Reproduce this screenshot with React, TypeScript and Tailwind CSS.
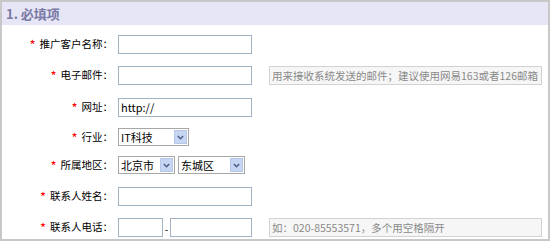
import React from "react";

const FONT = { fontFamily: '"Noto Sans CJK SC", "Noto Sans", sans-serif' };

function Label({ text }: { text: string }) {
  return (
    <div className="w-[111px] mr-[5px] shrink-0 flex justify-end items-center text-[10.5px] leading-none text-black">
      <span className="text-[#ff0000] text-[13px] mr-[4px] leading-none">*</span>
      <span>{text}：</span>
    </div>
  );
}

function Input({ w, value }: { w: string; value?: string }) {
  return (
    <div className={`${w} h-[19px] border border-[#a3b3c6] bg-white flex items-center pl-[2px] text-[11px] text-black`}>
      {value}
    </div>
  );
}

function Select({ w, value }: { w: string; value: string }) {
  return (
    <div className={`${w} h-[18px] border border-[#a7a7a7] bg-white flex items-center text-[11px] text-black`}>
      <span className="flex-1 pl-[2px] leading-none">{value}</span>
      <span className="w-[13px] h-[14px] mr-[1px] bg-[#c6d5f2] border border-[#b6c7e8] flex items-center justify-center">
        <svg width="7" height="5" viewBox="0 0 7 5">
          <path d="M0.8 1 L3.5 3.7 L6.2 1" fill="none" stroke="#4a5f87" strokeWidth="1.5" />
        </svg>
      </span>
    </div>
  );
}

function Hint({ text }: { text: string }) {
  return (
    <div className="ml-[17px] w-[273px] h-[19px] border border-[#d2d2d2] bg-[#f6f6f6] flex items-center pl-[2px] text-[10.5px] text-[#8a8a8a] whitespace-nowrap overflow-hidden">
      {text}
    </div>
  );
}

export default function App() {
  return (
    <div className="w-[550px] h-[241px] border-2 border-[#c8c8c8] bg-white flex flex-col overflow-hidden" style={FONT}>
      <div className="h-[23px] shrink-0 bg-[#e6e6f6] flex items-center pl-[4px] text-[13px] font-bold text-[#7a7aa6]">
        1. 必填项
      </div>
      <div className="flex flex-col">
        <div className="mt-[10px] flex items-center">
          <Label text="推广客户名称" />
          <Input w="w-[134px]" />
        </div>
        <div className="mt-[12px] flex items-center">
          <Label text="电子邮件" />
          <Input w="w-[134px]" />
          <Hint text="用来接收系统发送的邮件；建议使用网易163或者126邮箱" />
        </div>
        <div className="mt-[13px] flex items-center">
          <Label text="网址" />
          <Input w="w-[134px]" value="http://" />
        </div>
        <div className="mt-[11px] flex items-center">
          <Label text="行业" />
          <Select w="w-[71px]" value="IT科技" />
        </div>
        <div className="mt-[10px] flex items-center">
          <Label text="所属地区" />
          <Select w="w-[57px]" value="北京市" />
          <div className="ml-[3px]">
            <Select w="w-[67px]" value="东城区" />
          </div>
        </div>
        <div className="mt-[13px] flex items-center">
          <Label text="联系人姓名" />
          <Input w="w-[134px]" />
        </div>
        <div className="mt-[12px] flex items-center">
          <Label text="联系人电话" />
          <Input w="w-[45px]" />
          <span className="w-[7px] text-center text-[10px] leading-none self-end mb-[3px] text-black">-</span>
          <Input w="w-[82px]" />
          <Hint text="如：020-85553571，多个用空格隔开" />
        </div>
      </div>
    </div>
  );
}
